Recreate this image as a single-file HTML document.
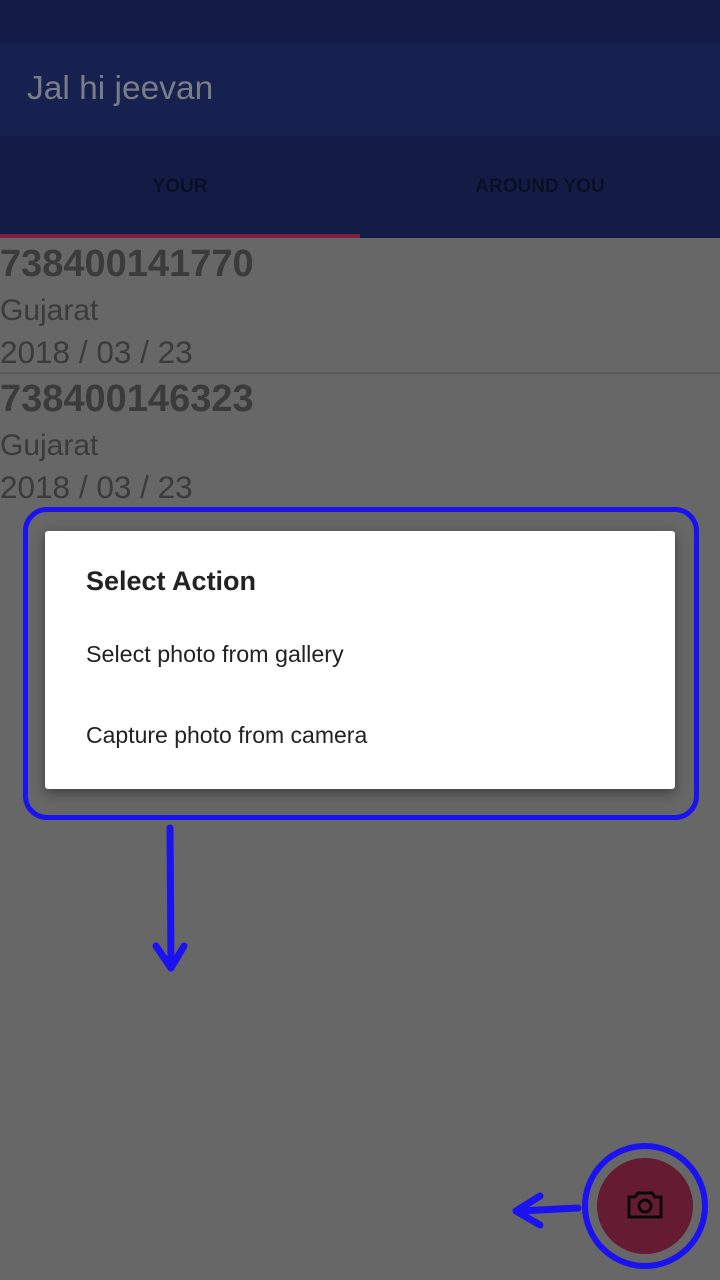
<!DOCTYPE html>
<html><head><style>
body{margin:0;width:720px;height:1280px;background:#676767;position:relative;overflow:hidden;font-family:"Liberation Sans",sans-serif}
.a{position:absolute}
</style></head><body>
<div class="a" style="left:0;top:0;width:720px;height:42px;background:#141c45"></div>
<div class="a" style="left:0;top:42px;width:720px;height:94px;background:#172150"></div>
<div class="a" style="left:27px;top:70px;font-size:33.5px;color:#7a7d88">Jal hi jeevan</div>
<div class="a" style="left:0;top:136px;width:720px;height:102px;background:#141c45"></div>
<div class="a" style="left:0;top:176px;width:360px;text-align:center;font-size:19px;font-weight:bold;color:#0b0f25">YOUR</div>
<div class="a" style="left:360px;top:176px;width:360px;text-align:center;font-size:19px;font-weight:bold;color:#0b0f25">AROUND YOU</div>
<div class="a" style="left:0;top:234px;width:360px;height:4px;background:#7a2040"></div>
<div class="a" style="left:0;top:243px;font-size:38px;font-weight:bold;color:#3b3b3b">738400141770</div>
<div class="a" style="left:0;top:294px;font-size:30px;color:#3b3b3b">Gujarat</div>
<div class="a" style="left:0;top:334px;font-size:31.5px;color:#3b3b3b">2018 / 03 / 23</div>
<div class="a" style="left:0;top:372px;width:720px;height:2px;background:#5a5a5a"></div>
<div class="a" style="left:0;top:378px;font-size:38px;font-weight:bold;color:#3b3b3b">738400146323</div>
<div class="a" style="left:0;top:429px;font-size:30px;color:#3b3b3b">Gujarat</div>
<div class="a" style="left:0;top:469px;font-size:31.5px;color:#3b3b3b">2018 / 03 / 23</div>
<div class="a" style="left:45px;top:531px;width:630px;height:258px;background:#fff;border-radius:3px;box-shadow:0 4px 12px rgba(0,0,0,.4)"></div>
<div class="a" style="left:86px;top:566px;font-size:27px;font-weight:bold;color:#222">Select Action</div>
<div class="a" style="left:86px;top:641px;font-size:23.3px;color:#222">Select photo from gallery</div>
<div class="a" style="left:86px;top:722px;font-size:23px;color:#222">Capture photo from camera</div>
<div class="a" style="left:23px;top:507px;width:666px;height:303px;border:5px solid #1a12f0;border-radius:24px"></div>
<svg class="a" style="left:0;top:0" width="720" height="1280">
<path d="M170 828 L171 965 M156 946 L171 968 L184 946" stroke="#1a12f0" stroke-width="7" fill="none" stroke-linecap="round" stroke-linejoin="round"/>
<path d="M578 1208 L520 1211 M540 1196 L516 1211 L540 1225" stroke="#1a12f0" stroke-width="7" fill="none" stroke-linecap="round" stroke-linejoin="round"/>
<circle cx="645" cy="1206" r="60" stroke="#1a12f0" stroke-width="6" fill="none"/>
<circle cx="645" cy="1206" r="48" fill="#651b31"/>
<g stroke="#0a0a0a" stroke-width="3" fill="none"><path d="M629 1197 h6 l3-4 h14 l3 4 h6 v20 h-32 z"/><circle cx="645" cy="1206" r="6"/></g>
</svg>
</body></html>
